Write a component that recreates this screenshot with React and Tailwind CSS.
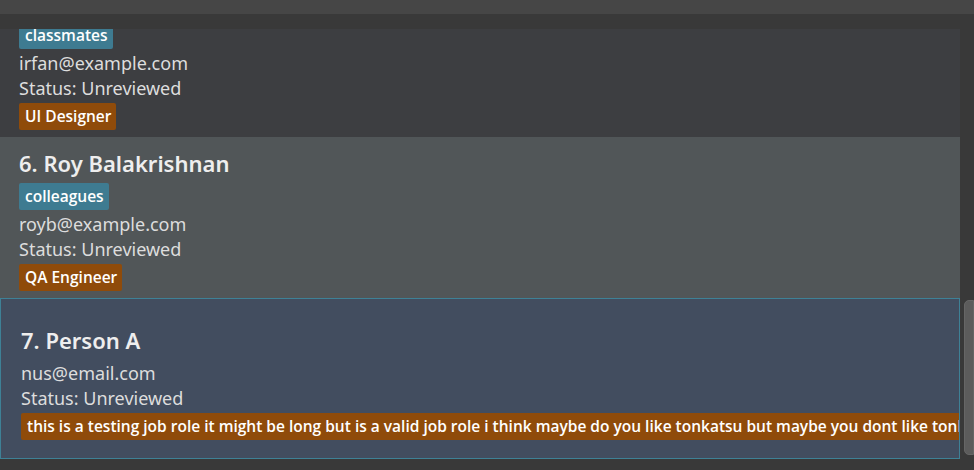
import React from "react";

const persons = [
  {
    index: 5,
    name: "Irfan Ibrahim",
    tags: ["classmates"],
    email: "irfan@example.com",
    status: "Unreviewed",
    role: "UI Designer",
  },
  {
    index: 6,
    name: "Roy Balakrishnan",
    tags: ["colleagues"],
    email: "royb@example.com",
    status: "Unreviewed",
    role: "QA Engineer",
  },
  {
    index: 7,
    name: "Person A",
    tags: [],
    email: "nus@email.com",
    status: "Unreviewed",
    role: "this is a testing job role it might be long but is a valid job role i think maybe do you like tonkatsu but maybe you dont like tonkatsu",
    selected: true,
  },
];

const tagFont = { fontFamily: '"Open Sans", "Noto Sans", sans-serif' };

function PersonCard({ person, first }) {
  const bg = person.selected
    ? "bg-[#424d5f] border border-[#3e8196] pl-[20px]"
    : person.index % 2 === 0
    ? "bg-[#515658] pl-[19px]"
    : "bg-[#3d3e41] pl-[19px]";
  const hasTags = person.tags.length > 0;

  return (
    <div className={`${bg} ${first ? "-mt-[53px]" : ""} h-[161px] shrink-0 flex flex-col justify-center pt-[2px] overflow-hidden`}>
      <div className={`${hasTags ? "" : "mt-[4px]"} h-[32px] leading-[32px] text-[22px] font-semibold text-[#eeeeee] whitespace-nowrap`}>
        {person.index}. {person.name}
      </div>
      {hasTags ? (
        <div className="flex gap-1 mt-[4px] mb-[1px]">
          {person.tags.map((tag) => (
            <span key={tag} style={tagFont} className="h-[27px] leading-[27px] pl-[6px] pr-[5px] rounded-[2px] bg-[#3e7b91] text-white text-[15.5px] font-semibold">
              {tag}
            </span>
          ))}
        </div>
      ) : (
        <div className="h-[4px]" />
      )}
      <div className="h-[26px] leading-[26px] text-[18px] text-[#dddddd]">{person.email}</div>
      <div className="h-[25px] leading-[25px] text-[18px] text-[#dddddd]">Status: {person.status}</div>
      <div className="flex mt-[2px]">
        <span style={tagFont} className="h-[27px] leading-[27px] pl-[6px] pr-[5px] rounded-[2px] bg-[#8f4b0a] text-white text-[15.5px] font-semibold whitespace-nowrap">
          {person.role}
        </span>
      </div>
    </div>
  );
}

export default function App() {
  return (
    <div className="w-[974px] h-[470px] bg-[#393939] flex flex-col overflow-hidden" style={{ fontFamily: '"Noto Sans", "Open Sans", sans-serif' }}>
      <div className="h-[14px] bg-[#464646] shrink-0" />
      <div className="h-[15px] bg-[#393939] shrink-0" />
      <div className="flex flex-1 min-h-0">
        <div className="w-[960px] flex flex-col overflow-hidden">
          {persons.map((p, i) => (
            <PersonCard key={p.index} person={p} first={i === 0} />
          ))}
        </div>
        <div className="w-[14px] flex flex-col pl-[4px]">
          <div className="h-[271px] shrink-0" />
          <div className="h-[155px] bg-[#5c5c5c] border border-[#666666] rounded-l-[5px]" />
        </div>
      </div>
    </div>
  );
}
